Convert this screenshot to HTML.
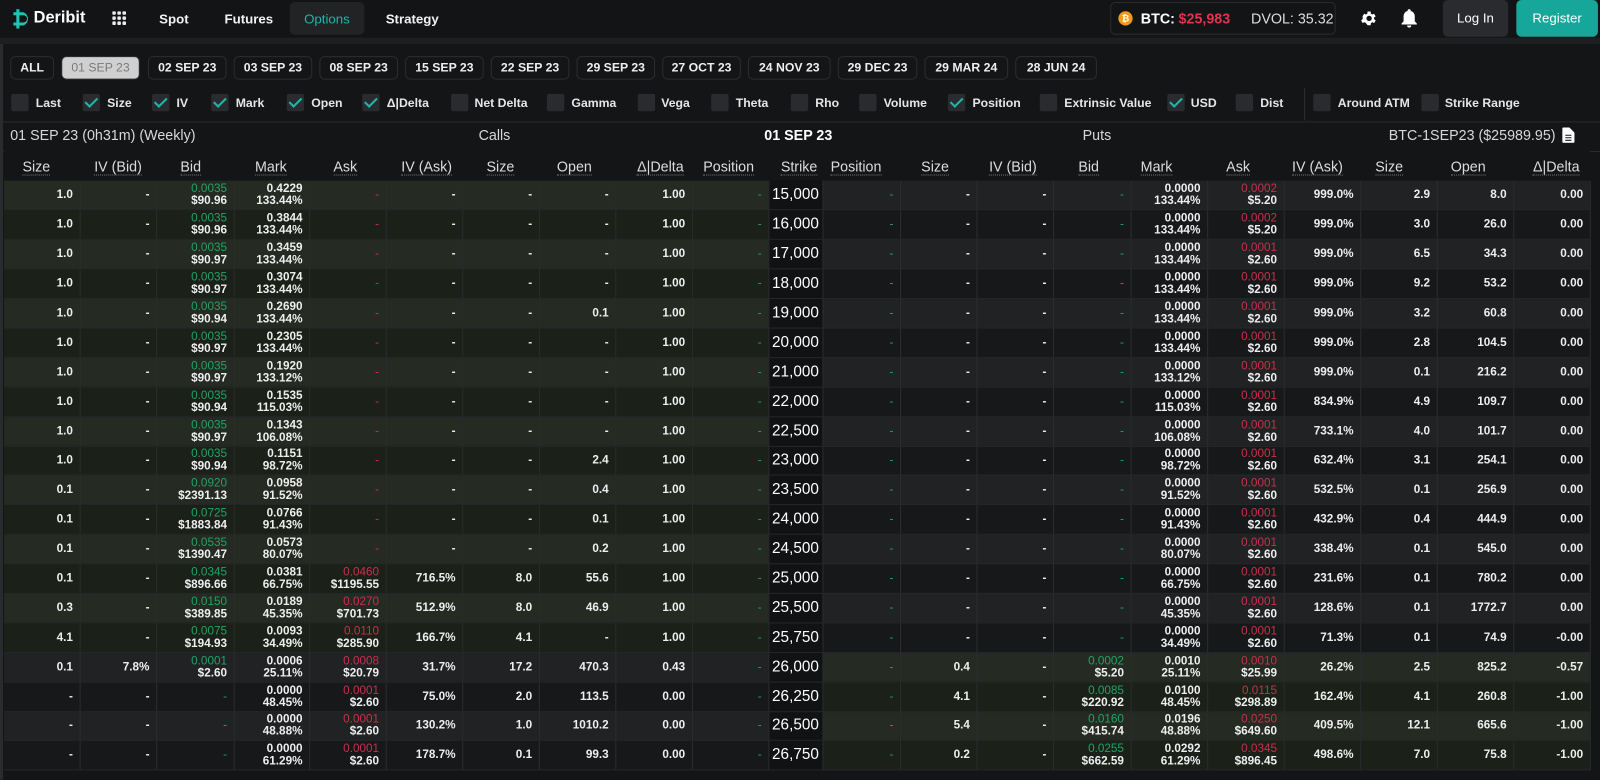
<!DOCTYPE html>
<html><head><meta charset="utf-8"><style>
*{box-sizing:border-box;margin:0;padding:0}
body{width:1600px;height:764px;overflow:hidden;background:#141517;font-family:"Liberation Sans",sans-serif;color:#e6e6e6;position:relative}
#w{position:absolute;left:0;top:0;width:1568px;height:749px;transform:scale(1.0204);transform-origin:0 0}
.nav{position:absolute;left:0;top:0;width:1568px;height:37px;background:#131416}
.a{position:absolute;white-space:nowrap}
.nv{font-size:13px;font-weight:bold;color:#f2f2f2;top:11px}
.strip{position:absolute;left:0;top:37px;width:1568px;height:6px;background:#1e1f21}
.lstrip{position:absolute;left:0;top:43px;width:3px;height:721px;background:#2a2b2d}
.pill{position:absolute;top:55px;height:23px;border:1px solid #2c2d30;border-radius:5px;font-size:12px;font-weight:bold;color:#eee;text-align:center;line-height:21px}
.bx{position:absolute;top:92px;width:17px;height:17px;background:#2a2b2e;border-radius:2px}
.bx.k::after{content:"";position:absolute;left:5px;top:1px;width:5px;height:10px;border-right:2px solid #1fb5a8;border-bottom:2px solid #1fb5a8;transform:rotate(45deg)}
.cl{position:absolute;top:94px;font-size:12px;font-weight:bold;color:#e6e6e6}
.hl{position:absolute;left:3px;width:1565px;height:1px;background:#2a2b2e}
.tt{position:absolute;top:124px;font-size:14px;color:#d8d8d8}
table{position:absolute;left:4px;top:148px;width:1554px;border-collapse:collapse;table-layout:fixed}
th{height:29px;font-size:14px;font-weight:normal;color:#dcdcdc;text-align:right;padding-right:14px;background:#141517}
th span{border-bottom:1px dotted #777}
td{height:28.9px;font-size:11.5px;font-weight:bold;text-align:right;padding-right:6px;border-right:1px solid #2b2d2f;border-bottom:1px solid #25272a;line-height:12px;color:#eee}
td.s{font-size:15px;background:#111214!important;padding-right:3px;font-weight:normal;color:#fff}
.g{color:#1fa463;font-weight:normal}.r{color:#c8304a;font-weight:normal}
tr.ca td:nth-child(-n+10){background:#252a23}tr.cd td:nth-child(-n+10){background:#1b2019}
tr.ca td:nth-child(n+12){background:#212224}tr.cd td:nth-child(n+12){background:#17181a}
tr.pa td:nth-child(n+12){background:#252a23}tr.pd td:nth-child(n+12){background:#1b2019}
tr.pa td:nth-child(-n+10){background:#212224}tr.pd td:nth-child(-n+10){background:#17181a}
</style></head><body><div id="w">
<div class="nav">
<svg class="a" style="left:13px;top:9px" width="18" height="19" viewBox="0 0 18 19"><path d="M3 0h3v3h4a7 7 0 0 1 0 13H6v3H3v-3H0v-3h3V6H0V3h3z M6 6v7h4a3.5 3.5 0 0 0 0-7z" fill="#1fc4b4" fill-rule="evenodd"/></svg>
<div class="a" style="left:33px;top:9px;font-size:16px;font-weight:bold;color:#fff">Deribit</div>
<svg class="a" style="left:110px;top:11px" width="14" height="14"><g fill="#eee"><rect x="0" y="0" width="3.5" height="3.5" rx="1"/><rect x="5" y="0" width="3.5" height="3.5" rx="1"/><rect x="10" y="0" width="3.5" height="3.5" rx="1"/><rect x="0" y="5" width="3.5" height="3.5" rx="1"/><rect x="5" y="5" width="3.5" height="3.5" rx="1"/><rect x="10" y="5" width="3.5" height="3.5" rx="1"/><rect x="0" y="10" width="3.5" height="3.5" rx="1"/><rect x="5" y="10" width="3.5" height="3.5" rx="1"/><rect x="10" y="10" width="3.5" height="3.5" rx="1"/></g></svg>
<div class="a nv" style="left:156px">Spot</div>
<div class="a nv" style="left:220px">Futures</div>
<div class="a" style="left:284px;top:2px;width:73px;height:32px;background:#212325;border-radius:5px"></div>
<div class="a nv" style="left:298px;color:#1fb5a8;font-weight:normal">Options</div>
<div class="a nv" style="left:378px">Strategy</div>
<div class="a" style="left:1088px;top:2px;width:221px;height:32px;border:1px solid #2a2b2e;border-radius:5px"></div>
<div class="a" style="left:1096px;top:11px;width:14px;height:14px;border-radius:50%;background:#f39a1e;font-size:9px;color:#fff;text-align:center;line-height:14px;font-weight:bold">₿</div>
<div class="a" style="left:1118px;top:10px;font-size:14px;font-weight:bold;color:#fff">BTC:</div>
<div class="a" style="left:1155px;top:10px;font-size:14px;font-weight:bold;color:#e0334e">$25,983</div>
<div class="a" style="left:1226px;top:10px;font-size:14px;color:#ddd">DVOL: 35.32</div>
<svg class="a" style="left:1332px;top:9px" width="18" height="18" viewBox="0 0 24 24"><path fill="#fff" d="M19.4 13a7.5 7.5 0 0 0 0-2l2.1-1.6-2-3.5-2.5 1a7.6 7.6 0 0 0-1.7-1L15 3h-4l-.4 2.9a7.6 7.6 0 0 0-1.7 1l-2.5-1-2 3.5L4.6 11a7.5 7.5 0 0 0 0 2l-2.1 1.6 2 3.5 2.5-1a7.6 7.6 0 0 0 1.7 1L11 21h4l.4-2.9a7.6 7.6 0 0 0 1.7-1l2.5 1 2-3.5zM13 15.5a3.5 3.5 0 1 1 0-7 3.5 3.5 0 0 1 0 7z"/></svg>
<svg class="a" style="left:1373px;top:9px" width="16" height="18" viewBox="0 0 16 18"><path fill="#fff" d="M8 0a1.5 1.5 0 0 1 1.5 1.6A5.5 5.5 0 0 1 13.5 7v5l2 2v1H.5v-1l2-2V7a5.5 5.5 0 0 1 4-5.4A1.5 1.5 0 0 1 8 0zM6 16h4a2 2 0 0 1-4 0z"/></svg>
<div class="a" style="left:1414px;top:0;width:64px;height:36px;background:#2a2b2e;border-radius:5px;font-size:13px;color:#fff;text-align:center;line-height:36px">Log In</div>
<div class="a" style="left:1486px;top:0;width:80px;height:36px;background:#17a79a;border-radius:5px;font-size:13px;color:#fff;text-align:center;line-height:36px">Register</div>
</div>
<div class="strip"></div><div class="lstrip"></div>
<div class="pill" style="left:10px;width:43px">ALL</div>
<div class="pill" style="left:60px;width:77px;background:#d0d0d0;color:#7a7a7a;font-weight:normal">01 SEP 23</div>
<div class="pill" style="left:145px;width:77px">02 SEP 23</div>
<div class="pill" style="left:229px;width:77px">03 SEP 23</div>
<div class="pill" style="left:313px;width:77px">08 SEP 23</div>
<div class="pill" style="left:397px;width:77px">15 SEP 23</div>
<div class="pill" style="left:481px;width:77px">22 SEP 23</div>
<div class="pill" style="left:565px;width:77px">29 SEP 23</div>
<div class="pill" style="left:649px;width:77px">27 OCT 23</div>
<div class="pill" style="left:733px;width:81px">24 NOV 23</div>
<div class="pill" style="left:821px;width:78px">29 DEC 23</div>
<div class="pill" style="left:906px;width:82px">29 MAR 24</div>
<div class="pill" style="left:995px;width:80px">28 JUN 24</div>

<div class="bx" style="left:11px"></div><div class="cl" style="left:35px">Last</div>
<div class="bx k" style="left:81px"></div><div class="cl" style="left:105px">Size</div>
<div class="bx k" style="left:149px"></div><div class="cl" style="left:173px">IV</div>
<div class="bx k" style="left:207px"></div><div class="cl" style="left:231px">Mark</div>
<div class="bx k" style="left:281px"></div><div class="cl" style="left:305px">Open</div>
<div class="bx k" style="left:355px"></div><div class="cl" style="left:379px">Δ|Delta</div>
<div class="bx" style="left:442px"></div><div class="cl" style="left:465px">Net Delta</div>
<div class="bx" style="left:536px"></div><div class="cl" style="left:560px">Gamma</div>
<div class="bx" style="left:625px"></div><div class="cl" style="left:648px">Vega</div>
<div class="bx" style="left:697px"></div><div class="cl" style="left:721px">Theta</div>
<div class="bx" style="left:775px"></div><div class="cl" style="left:799px">Rho</div>
<div class="bx" style="left:842px"></div><div class="cl" style="left:866px">Volume</div>
<div class="bx k" style="left:929px"></div><div class="cl" style="left:953px">Position</div>
<div class="bx" style="left:1019px"></div><div class="cl" style="left:1043px">Extrinsic Value</div>
<div class="bx k" style="left:1144px"></div><div class="cl" style="left:1167px">USD</div>
<div class="bx" style="left:1211px"></div><div class="cl" style="left:1235px">Dist</div>
<div class="a" style="left:1278px;top:86px;width:1px;height:32px;background:#2e2f32"></div>
<div class="bx" style="left:1287px"></div><div class="cl" style="left:1311px">Around ATM</div>
<div class="bx" style="left:1393px"></div><div class="cl" style="left:1416px">Strike Range</div>
<div class="hl" style="top:119px"></div>
<div class="tt" style="left:10px">01 SEP 23 (0h31m) (Weekly)</div>
<div class="tt" style="left:469px">Calls</div>
<div class="tt" style="left:749px;color:#fff;font-weight:bold">01 SEP 23</div>
<div class="tt" style="left:1061px">Puts</div>
<div class="tt" style="left:1361px">BTC-1SEP23 ($25989.95)</div>
<svg class="a" style="left:1531px;top:125px" width="12" height="15" viewBox="0 0 12 15"><path fill="#fff" d="M0 1a1 1 0 0 1 1-1h6l5 5v9a1 1 0 0 1-1 1H1a1 1 0 0 1-1-1z"/><path fill="#141517" d="M3 7h6v1H3zM3 9.5h6v1H3zM3 12h6v1H3z"/></svg>
<div class="hl" style="top:148px"></div>

<table>
<colgroup><col style="width:74px"><col style="width:75px"><col style="width:76px"><col style="width:74px"><col style="width:75px"><col style="width:75px"><col style="width:75px"><col style="width:75px"><col style="width:75px"><col style="width:75px"><col style="width:53px"><col style="width:76px"><col style="width:75px"><col style="width:75px"><col style="width:76px"><col style="width:75px"><col style="width:75px"><col style="width:75px"><col style="width:75px"><col style="width:75px"><col style="width:75px"></colgroup>
<tr><th style="text-align:left;padding-left:18px"><span>Size</span></th><th style="padding-right:14px"><span>IV (Bid)</span></th><th style="padding-right:32px"><span>Bid</span></th><th style="padding-right:22px"><span>Mark</span></th><th style="padding-right:28px"><span>Ask</span></th><th style="padding-right:10px"><span>IV (Ask)</span></th><th style="padding-right:24px"><span>Size</span></th><th style="padding-right:23px"><span>Open</span></th><th style="padding-right:8px"><span>Δ|Delta</span></th><th style="padding-right:14px"><span>Position</span></th><th style="padding-right:5px;text-align:right"><span>Strike</span></th><th style="text-align:left;padding-left:8px"><span>Position</span></th><th style="padding-right:27px"><span>Size</span></th><th style="padding-right:16px"><span>IV (Bid)</span></th><th style="padding-right:31px"><span>Bid</span></th><th style="padding-right:34px"><span>Mark</span></th><th style="padding-right:33px"><span>Ask</span></th><th style="padding-right:17px"><span>IV (Ask)</span></th><th style="padding-right:33px"><span>Size</span></th><th style="padding-right:27px"><span>Open</span></th><th style="padding-right:10px"><span>Δ|Delta</span></th></tr>
<tr class="ca"><td>1.0</td><td>-</td><td><span class="g">0.0035</span><br>$90.96</td><td>0.4229<br>133.44%</td><td class="r">-</td><td>-</td><td>-</td><td>-</td><td>1.00</td><td class="g">-</td><td class="s">15,000</td><td class="g">-</td><td>-</td><td>-</td><td class="g">-</td><td>0.0000<br>133.44%</td><td><span class="r">0.0002</span><br>$5.20</td><td>999.0%</td><td>2.9</td><td>8.0</td><td>0.00</td></tr>
<tr class="cd"><td>1.0</td><td>-</td><td><span class="g">0.0035</span><br>$90.96</td><td>0.3844<br>133.44%</td><td class="r">-</td><td>-</td><td>-</td><td>-</td><td>1.00</td><td class="g">-</td><td class="s">16,000</td><td class="g">-</td><td>-</td><td>-</td><td class="g">-</td><td>0.0000<br>133.44%</td><td><span class="r">0.0002</span><br>$5.20</td><td>999.0%</td><td>3.0</td><td>26.0</td><td>0.00</td></tr>
<tr class="ca"><td>1.0</td><td>-</td><td><span class="g">0.0035</span><br>$90.97</td><td>0.3459<br>133.44%</td><td class="r">-</td><td>-</td><td>-</td><td>-</td><td>1.00</td><td class="g">-</td><td class="s">17,000</td><td class="g">-</td><td>-</td><td>-</td><td class="g">-</td><td>0.0000<br>133.44%</td><td><span class="r">0.0001</span><br>$2.60</td><td>999.0%</td><td>6.5</td><td>34.3</td><td>0.00</td></tr>
<tr class="cd"><td>1.0</td><td>-</td><td><span class="g">0.0035</span><br>$90.97</td><td>0.3074<br>133.44%</td><td class="r">-</td><td>-</td><td>-</td><td>-</td><td>1.00</td><td class="g">-</td><td class="s">18,000</td><td class="g">-</td><td>-</td><td>-</td><td class="g">-</td><td>0.0000<br>133.44%</td><td><span class="r">0.0001</span><br>$2.60</td><td>999.0%</td><td>9.2</td><td>53.2</td><td>0.00</td></tr>
<tr class="ca"><td>1.0</td><td>-</td><td><span class="g">0.0035</span><br>$90.94</td><td>0.2690<br>133.44%</td><td class="r">-</td><td>-</td><td>-</td><td>0.1</td><td>1.00</td><td class="g">-</td><td class="s">19,000</td><td class="g">-</td><td>-</td><td>-</td><td class="g">-</td><td>0.0000<br>133.44%</td><td><span class="r">0.0001</span><br>$2.60</td><td>999.0%</td><td>3.2</td><td>60.8</td><td>0.00</td></tr>
<tr class="cd"><td>1.0</td><td>-</td><td><span class="g">0.0035</span><br>$90.97</td><td>0.2305<br>133.44%</td><td class="r">-</td><td>-</td><td>-</td><td>-</td><td>1.00</td><td class="g">-</td><td class="s">20,000</td><td class="g">-</td><td>-</td><td>-</td><td class="g">-</td><td>0.0000<br>133.44%</td><td><span class="r">0.0001</span><br>$2.60</td><td>999.0%</td><td>2.8</td><td>104.5</td><td>0.00</td></tr>
<tr class="ca"><td>1.0</td><td>-</td><td><span class="g">0.0035</span><br>$90.97</td><td>0.1920<br>133.12%</td><td class="r">-</td><td>-</td><td>-</td><td>-</td><td>1.00</td><td class="g">-</td><td class="s">21,000</td><td class="g">-</td><td>-</td><td>-</td><td class="g">-</td><td>0.0000<br>133.12%</td><td><span class="r">0.0001</span><br>$2.60</td><td>999.0%</td><td>0.1</td><td>216.2</td><td>0.00</td></tr>
<tr class="cd"><td>1.0</td><td>-</td><td><span class="g">0.0035</span><br>$90.94</td><td>0.1535<br>115.03%</td><td class="r">-</td><td>-</td><td>-</td><td>-</td><td>1.00</td><td class="g">-</td><td class="s">22,000</td><td class="g">-</td><td>-</td><td>-</td><td class="g">-</td><td>0.0000<br>115.03%</td><td><span class="r">0.0001</span><br>$2.60</td><td>834.9%</td><td>4.9</td><td>109.7</td><td>0.00</td></tr>
<tr class="ca"><td>1.0</td><td>-</td><td><span class="g">0.0035</span><br>$90.97</td><td>0.1343<br>106.08%</td><td class="r">-</td><td>-</td><td>-</td><td>-</td><td>1.00</td><td class="g">-</td><td class="s">22,500</td><td class="g">-</td><td>-</td><td>-</td><td class="g">-</td><td>0.0000<br>106.08%</td><td><span class="r">0.0001</span><br>$2.60</td><td>733.1%</td><td>4.0</td><td>101.7</td><td>0.00</td></tr>
<tr class="cd"><td>1.0</td><td>-</td><td><span class="g">0.0035</span><br>$90.94</td><td>0.1151<br>98.72%</td><td class="r">-</td><td>-</td><td>-</td><td>2.4</td><td>1.00</td><td class="g">-</td><td class="s">23,000</td><td class="g">-</td><td>-</td><td>-</td><td class="g">-</td><td>0.0000<br>98.72%</td><td><span class="r">0.0001</span><br>$2.60</td><td>632.4%</td><td>3.1</td><td>254.1</td><td>0.00</td></tr>
<tr class="ca"><td>0.1</td><td>-</td><td><span class="g">0.0920</span><br>$2391.13</td><td>0.0958<br>91.52%</td><td class="r">-</td><td>-</td><td>-</td><td>0.4</td><td>1.00</td><td class="g">-</td><td class="s">23,500</td><td class="g">-</td><td>-</td><td>-</td><td class="g">-</td><td>0.0000<br>91.52%</td><td><span class="r">0.0001</span><br>$2.60</td><td>532.5%</td><td>0.1</td><td>256.9</td><td>0.00</td></tr>
<tr class="cd"><td>0.1</td><td>-</td><td><span class="g">0.0725</span><br>$1883.84</td><td>0.0766<br>91.43%</td><td class="r">-</td><td>-</td><td>-</td><td>0.1</td><td>1.00</td><td class="g">-</td><td class="s">24,000</td><td class="g">-</td><td>-</td><td>-</td><td class="g">-</td><td>0.0000<br>91.43%</td><td><span class="r">0.0001</span><br>$2.60</td><td>432.9%</td><td>0.4</td><td>444.9</td><td>0.00</td></tr>
<tr class="ca"><td>0.1</td><td>-</td><td><span class="g">0.0535</span><br>$1390.47</td><td>0.0573<br>80.07%</td><td class="r">-</td><td>-</td><td>-</td><td>0.2</td><td>1.00</td><td class="g">-</td><td class="s">24,500</td><td class="g">-</td><td>-</td><td>-</td><td class="g">-</td><td>0.0000<br>80.07%</td><td><span class="r">0.0001</span><br>$2.60</td><td>338.4%</td><td>0.1</td><td>545.0</td><td>0.00</td></tr>
<tr class="cd"><td>0.1</td><td>-</td><td><span class="g">0.0345</span><br>$896.66</td><td>0.0381<br>66.75%</td><td><span class="r">0.0460</span><br>$1195.55</td><td>716.5%</td><td>8.0</td><td>55.6</td><td>1.00</td><td class="g">-</td><td class="s">25,000</td><td class="g">-</td><td>-</td><td>-</td><td class="g">-</td><td>0.0000<br>66.75%</td><td><span class="r">0.0001</span><br>$2.60</td><td>231.6%</td><td>0.1</td><td>780.2</td><td>0.00</td></tr>
<tr class="ca"><td>0.3</td><td>-</td><td><span class="g">0.0150</span><br>$389.85</td><td>0.0189<br>45.35%</td><td><span class="r">0.0270</span><br>$701.73</td><td>512.9%</td><td>8.0</td><td>46.9</td><td>1.00</td><td class="g">-</td><td class="s">25,500</td><td class="g">-</td><td>-</td><td>-</td><td class="g">-</td><td>0.0000<br>45.35%</td><td><span class="r">0.0001</span><br>$2.60</td><td>128.6%</td><td>0.1</td><td>1772.7</td><td>0.00</td></tr>
<tr class="cd"><td>4.1</td><td>-</td><td><span class="g">0.0075</span><br>$194.93</td><td>0.0093<br>34.49%</td><td><span class="r">0.0110</span><br>$285.90</td><td>166.7%</td><td>4.1</td><td>-</td><td>1.00</td><td class="g">-</td><td class="s">25,750</td><td class="g">-</td><td>-</td><td>-</td><td class="g">-</td><td>0.0000<br>34.49%</td><td><span class="r">0.0001</span><br>$2.60</td><td>71.3%</td><td>0.1</td><td>74.9</td><td>-0.00</td></tr>
<tr class="pa"><td>0.1</td><td>7.8%</td><td><span class="g">0.0001</span><br>$2.60</td><td>0.0006<br>25.11%</td><td><span class="r">0.0008</span><br>$20.79</td><td>31.7%</td><td>17.2</td><td>470.3</td><td>0.43</td><td class="g">-</td><td class="s">26,000</td><td class="g">-</td><td>0.4</td><td>-</td><td><span class="g">0.0002</span><br>$5.20</td><td>0.0010<br>25.11%</td><td><span class="r">0.0010</span><br>$25.99</td><td>26.2%</td><td>2.5</td><td>825.2</td><td>-0.57</td></tr>
<tr class="pd"><td>-</td><td>-</td><td class="g">-</td><td>0.0000<br>48.45%</td><td><span class="r">0.0001</span><br>$2.60</td><td>75.0%</td><td>2.0</td><td>113.5</td><td>0.00</td><td class="g">-</td><td class="s">26,250</td><td class="g">-</td><td>4.1</td><td>-</td><td><span class="g">0.0085</span><br>$220.92</td><td>0.0100<br>48.45%</td><td><span class="r">0.0115</span><br>$298.89</td><td>162.4%</td><td>4.1</td><td>260.8</td><td>-1.00</td></tr>
<tr class="pa"><td>-</td><td>-</td><td class="g">-</td><td>0.0000<br>48.88%</td><td><span class="r">0.0001</span><br>$2.60</td><td>130.2%</td><td>1.0</td><td>1010.2</td><td>0.00</td><td class="g">-</td><td class="s">26,500</td><td class="g">-</td><td>5.4</td><td>-</td><td><span class="g">0.0160</span><br>$415.74</td><td>0.0196<br>48.88%</td><td><span class="r">0.0250</span><br>$649.60</td><td>409.5%</td><td>12.1</td><td>665.6</td><td>-1.00</td></tr>
<tr class="pd"><td>-</td><td>-</td><td class="g">-</td><td>0.0000<br>61.29%</td><td><span class="r">0.0001</span><br>$2.60</td><td>178.7%</td><td>0.1</td><td>99.3</td><td>0.00</td><td class="g">-</td><td class="s">26,750</td><td class="g">-</td><td>0.2</td><td>-</td><td><span class="g">0.0255</span><br>$662.59</td><td>0.0292<br>61.29%</td><td><span class="r">0.0345</span><br>$896.45</td><td>498.6%</td><td>7.0</td><td>75.8</td><td>-1.00</td></tr>
</table>
</div></body></html>
